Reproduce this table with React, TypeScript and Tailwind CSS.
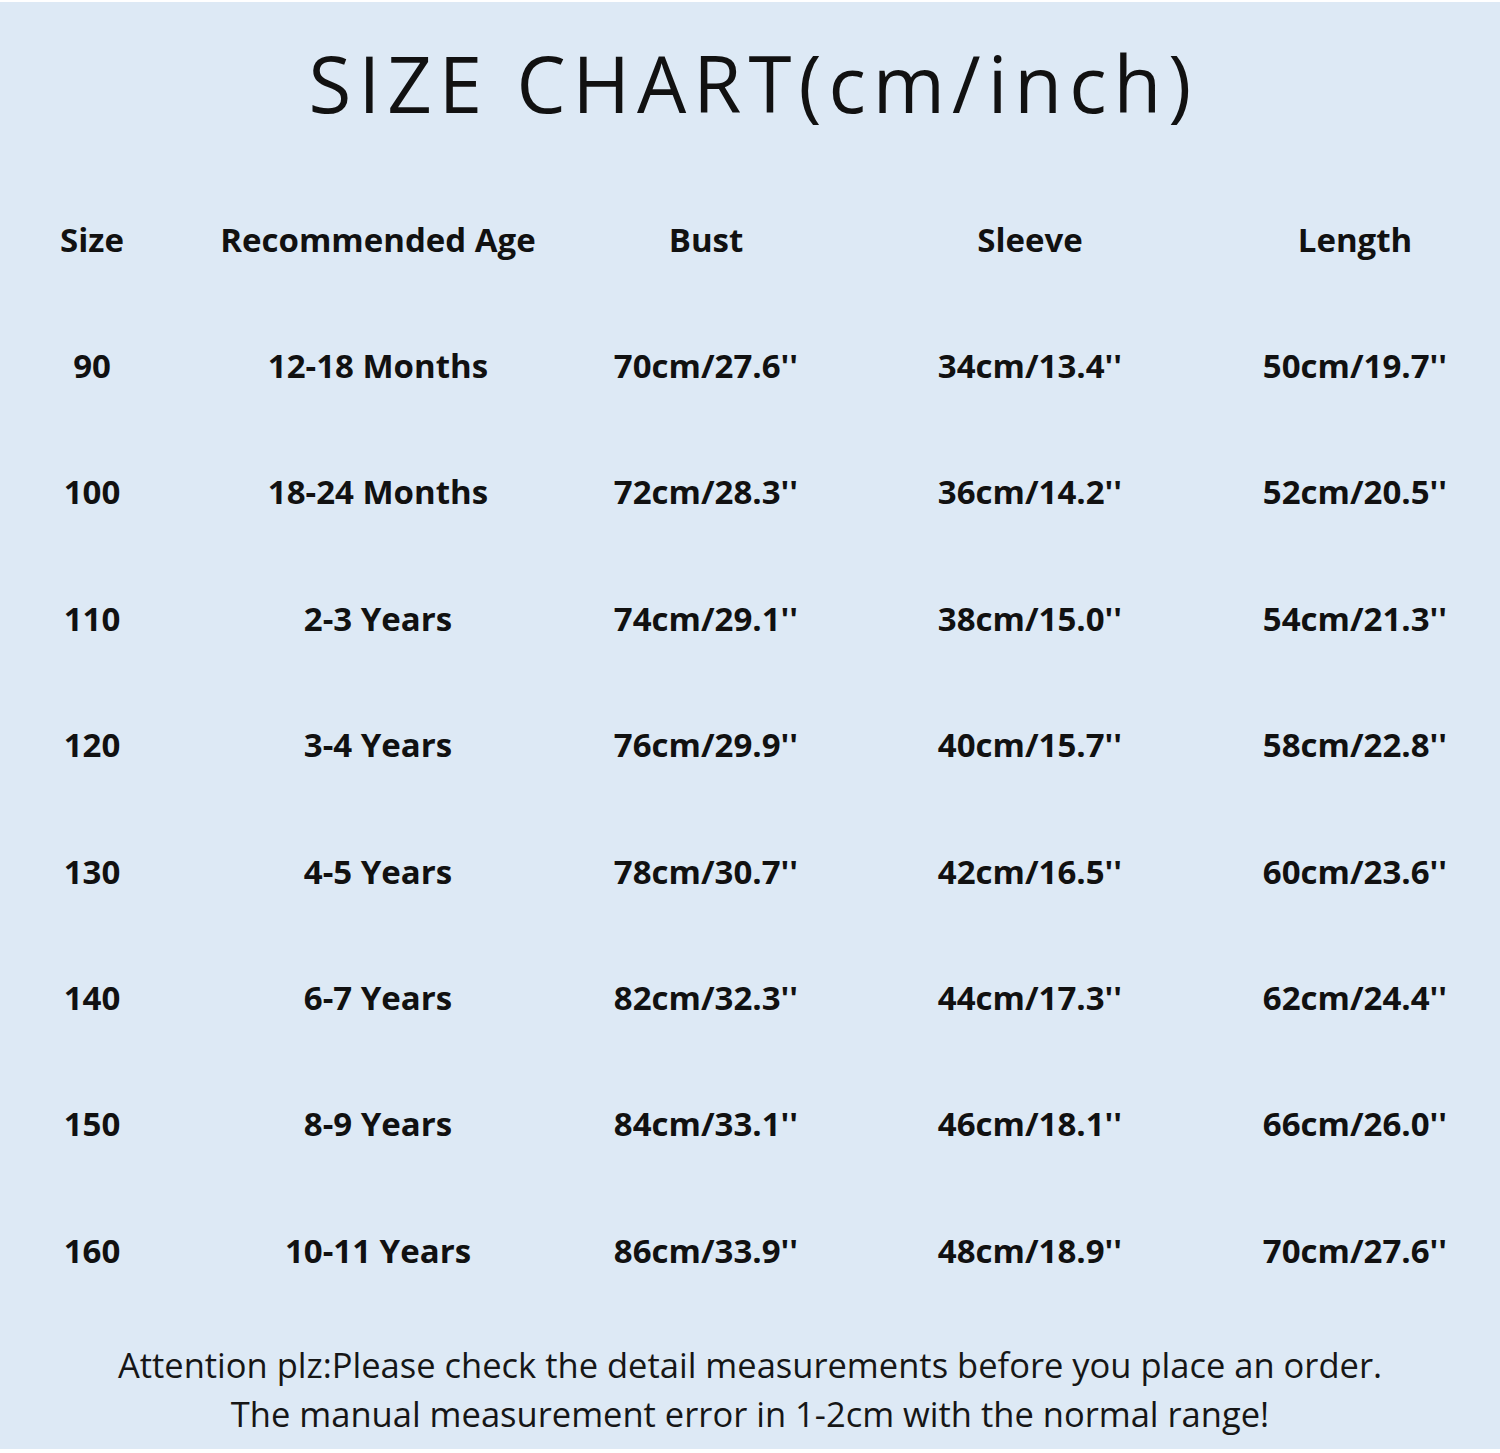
import React from "react";

const rows = [
  ["90", "12-18 Months", "70cm/27.6''", "34cm/13.4''", "50cm/19.7''"],
  ["100", "18-24 Months", "72cm/28.3''", "36cm/14.2''", "52cm/20.5''"],
  ["110", "2-3 Years", "74cm/29.1''", "38cm/15.0''", "54cm/21.3''"],
  ["120", "3-4 Years", "76cm/29.9''", "40cm/15.7''", "58cm/22.8''"],
  ["130", "4-5 Years", "78cm/30.7''", "42cm/16.5''", "60cm/23.6''"],
  ["140", "6-7 Years", "82cm/32.3''", "44cm/17.3''", "62cm/24.4''"],
  ["150", "8-9 Years", "84cm/33.1''", "46cm/18.1''", "66cm/26.0''"],
  ["160", "10-11 Years", "86cm/33.9''", "48cm/18.9''", "70cm/27.6''"],
];

const headers = ["Size", "Recommended Age", "Bust", "Sleeve", "Length"];

export default function App() {
  return (
    <div className="w-[1500px] h-[1453px] bg-white flex flex-col">
      <div className="mt-[2px] h-[1447px] bg-[#dde9f5] flex flex-col items-center text-[#111111]">
        <h1
          className="mt-[26px] h-[110px] flex items-center text-[78px] font-medium tracking-[7px] leading-none pl-[7px]"
          style={{ fontFamily: "'Open Sans', 'Noto Sans', sans-serif" }}
        >
          SIZE CHART(cm/inch)
        </h1>
        <div
          className="mt-[38px] w-full grid grid-cols-[184px_388px_268px_380px_270px] auto-rows-[126.4px] font-bold text-[33px] leading-none"
          style={{ fontFamily: "'Open Sans', 'Noto Sans', sans-serif" }}
        >
          {headers.map((h) => (
            <div key={h} className="flex items-center justify-center">
              {h}
            </div>
          ))}
          {rows.map((r, i) =>
            r.map((c, j) => (
              <div key={`${i}-${j}`} className="flex items-center justify-center">
                {c}
              </div>
            ))
          )}
        </div>
        <div
          className="mt-[26px] flex flex-col items-center text-[34.5px] leading-[49px] text-[#161616]"
          style={{ fontFamily: "'Open Sans', 'Noto Sans', sans-serif" }}
        >
          <div>Attention plz:Please check the detail measurements before you place an order.</div>
          <div>The manual measurement error in 1-2cm with the normal range!</div>
        </div>
      </div>
    </div>
  );
}
